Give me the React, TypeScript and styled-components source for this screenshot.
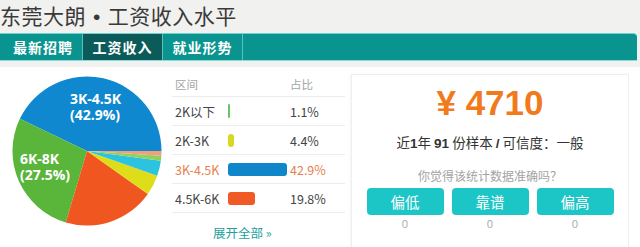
import React from "react";
import styled, { createGlobalStyle } from "styled-components";

type Slice = { value: number; color: string };

const slices: Slice[] = [
    { value: 42.9, color: "#0f88cf" },
    { value: 27.5, color: "#5ab53b" },
    { value: 19.8, color: "#f0561f" },
    { value: 4.4, color: "#dfdc1a" },
    { value: 3.3, color: "#2bc3e0" },
    { value: 1.1, color: "#8fd35e" },
    { value: 1.0, color: "#f2a07a" },
];

const rows = [
    { label: "2K以下", pct: "1.1%", width: 2, color: "#67c46a", hot: false },
    { label: "2K-3K", pct: "4.4%", width: 6, color: "#d7d821", hot: false },
    { label: "3K-4.5K", pct: "42.9%", width: 59, color: "#0f86c9", hot: true },
    { label: "4.5K-6K", pct: "19.8%", width: 27, color: "#ef5a25", hot: false },
];

const votes = ["偏低", "靠谱", "偏高"];

const CX = 75;
const CY = 75;
const R = 74.5;

function point(deg: number) {
    const a = (deg * Math.PI) / 180;
    return `${(CX + R * Math.cos(a)).toFixed(2)} ${(CY - R * Math.sin(a)).toFixed(2)}`;
}

function slicePath(start: number, end: number) {
    const large = end - start > 180 ? 1 : 0;
    return `M ${CX} ${CY} L ${point(start)} A ${R} ${R} 0 ${large} 0 ${point(end)} Z`;
}

function Pie() {
    let acc = 0;
    return (
        <PieSvg width={150} height={150} viewBox="0 0 150 150">
            {slices.map((s, i) => {
                const start = (acc / 100) * 360;
                acc += s.value;
                const end = (acc / 100) * 360;
                return <path key={i} d={slicePath(start, end)} fill={s.color} />;
            })}
            <PieLabel>
                <tspan x={58} y={28}>3K-4.5K</tspan>
                <tspan x={58} y={44}>(42.9%)</tspan>
            </PieLabel>
            <PieLabel>
                <tspan x={8} y={88}>6K-8K</tspan>
                <tspan x={8} y={104}>(27.5%)</tspan>
            </PieLabel>
        </PieSvg>
    );
}

export default function App() {
    return (
        <>
            <GlobalStyle />
            <Page>
                <Title>
                    东莞大朗<Dot>•</Dot>工资收入水平
                </Title>
                <TabBar>
                    <Tab>最新招聘</Tab>
                    <Tab $active>工资收入</Tab>
                    <Tab>就业形势</Tab>
                </TabBar>
                <Content>
                    <PieColumn>
                        <Pie />
                    </PieColumn>
                    <Table>
                        <HeadRow>
                            <span>区间</span>
                            <span />
                            <span>占比</span>
                        </HeadRow>
                        {rows.map((r) => (
                            <Row key={r.label} $hot={r.hot}>
                                <span>{r.label}</span>
                                <BarCell>
                                    <Bar style={{ width: r.width }} $color={r.color} $thin={r.width < 4} />
                                </BarCell>
                                <span>{r.pct}</span>
                            </Row>
                        ))}
                        <More>展开全部 »</More>
                    </Table>
                    <Card>
                        <Salary>¥ 4710</Salary>
                        <Sample>
                            近<b>1</b>年 <b>91</b> 份样本 <b>/</b> 可信度：一般
                        </Sample>
                        <Question>你觉得该统计数据准确吗？</Question>
                        <Votes>
                            {votes.map((v) => (
                                <Vote key={v}>
                                    <VoteButton>{v}</VoteButton>
                                    <VoteCount>0</VoteCount>
                                </Vote>
                            ))}
                        </Votes>
                    </Card>
                </Content>
            </Page>
        </>
    );
}

const GlobalStyle = createGlobalStyle`
    html, body {
        margin: 0;
        padding: 0;
        background: #f1f1ef;
        font-family: "Noto Sans CJK SC", "Noto Sans", sans-serif;
    }
`;

const Page = styled.div`
    width: 640px;
    height: 247px;
    overflow: hidden;
    display: flex;
    flex-direction: column;
    & > * {
        flex-shrink: 0;
    }
`;

const Title = styled.h1`
    margin: 0;
    height: 33px;
    font-size: 21px;
    line-height: 30px;
    font-weight: 400;
    color: #3a3a3a;
    letter-spacing: 0.5px;
`;

const Dot = styled.span`
    font-family: "Liberation Sans", Arial, sans-serif;
    margin: 0 7px;
`;

const TabBar = styled.div`
    display: flex;
    width: 637px;
    height: 26px;
    background: #0a948f;
    border-top: 1px solid #6fd2cf;
    border-bottom: 1px solid #8adbd8;
    border-top-right-radius: 4px;
`;

const Tab = styled.div<{ $active?: boolean }>`
    width: 80px;
    box-sizing: border-box;
    display: flex;
    align-items: center;
    justify-content: center;
    font-size: 14px;
    font-weight: 700;
    color: #ffffff;
    letter-spacing: 1px;
    background: ${(p) => (p.$active ? "#0c5b5b" : "transparent")};
    border-right: 1px solid #5cc1bd;
    &:first-child {
        width: 83px;
        padding-left: 4px;
    }
`;

const Content = styled.div`
    flex: 1;
    margin-top: 6px;
    background: #ffffff;
    display: flex;
    align-items: flex-start;
`;

const PieColumn = styled.div`
    width: 172px;
    padding: 9px 0 0 12px;
    box-sizing: border-box;
`;

const PieSvg = styled.svg`
    display: block;
`;

const PieLabel = styled.text`
    font-family: "Open Sans", "DejaVu Sans", sans-serif;
    font-size: 14px;
    font-weight: 700;
    fill: #ffffff;
`;

const Table = styled.div`
    width: 173px;
    display: flex;
    flex-direction: column;
    padding-top: 4px;
`;

const HeadRow = styled.div`
    display: grid;
    grid-template-columns: 53px 62px auto;
    height: 25px;
    align-items: center;
    padding-left: 3px;
    font-size: 11.5px;
    color: #a4a4a4;
    border-bottom: 1px solid #ececec;
`;

const Row = styled.div<{ $hot: boolean }>`
    display: grid;
    grid-template-columns: 53px 62px auto;
    height: 28px;
    align-items: center;
    padding-left: 3px;
    font-size: 12.5px;
    color: ${(p) => (p.$hot ? "#e8804f" : "#444444")};
    border-bottom: 1px solid #ececec;
`;

const BarCell = styled.div`
    display: flex;
    align-items: center;
`;

const Bar = styled.div<{ $color: string; $thin: boolean }>`
    height: ${(p) => (p.$thin ? 14 : 13)}px;
    background: ${(p) => p.$color};
    border-radius: ${(p) => (p.$thin ? 1 : 3)}px;
`;

const More = styled.div`
    padding: 10px 0 0 41px;
    font-size: 12.5px;
    color: #22a09b;
`;

const Card = styled.div`
    margin: 7px 0 0 6px;
    width: 278px;
    height: 190px;
    box-sizing: border-box;
    border: 1px solid #efefef;
    border-bottom: none;
    box-shadow: -1px 0 3px rgba(0, 0, 0, 0.04);
    display: flex;
    flex-direction: column;
    align-items: center;
`;

const Salary = styled.div`
    margin-top: 5px;
    font-family: "Liberation Sans", Arial, sans-serif;
    font-size: 35px;
    line-height: 46px;
    font-weight: 700;
    color: #f17a1c;
`;

const Sample = styled.div`
    margin-top: 6px;
    font-size: 13.5px;
    line-height: 20px;
    color: #333333;
    b {
        font-family: "Liberation Sans", Arial, sans-serif;
        font-weight: 700;
    }
`;

const Question = styled.div`
    margin-top: 13px;
    font-size: 12px;
    line-height: 17px;
    color: #a3a3a3;
`;

const Votes = styled.div`
    margin-top: 4px;
    display: flex;
    gap: 8px;
`;

const Vote = styled.div`
    display: flex;
    flex-direction: column;
    align-items: center;
`;

const VoteButton = styled.div`
    width: 77px;
    height: 27px;
    border-radius: 4px;
    background: #1dc6c6;
    color: #ffffff;
    font-size: 14.5px;
    display: flex;
    align-items: center;
    justify-content: center;
`;

const VoteCount = styled.div`
    margin-top: 1px;
    font-family: "Open Sans", sans-serif;
    font-size: 11px;
    line-height: 15px;
    color: #a9a9a9;
`;
